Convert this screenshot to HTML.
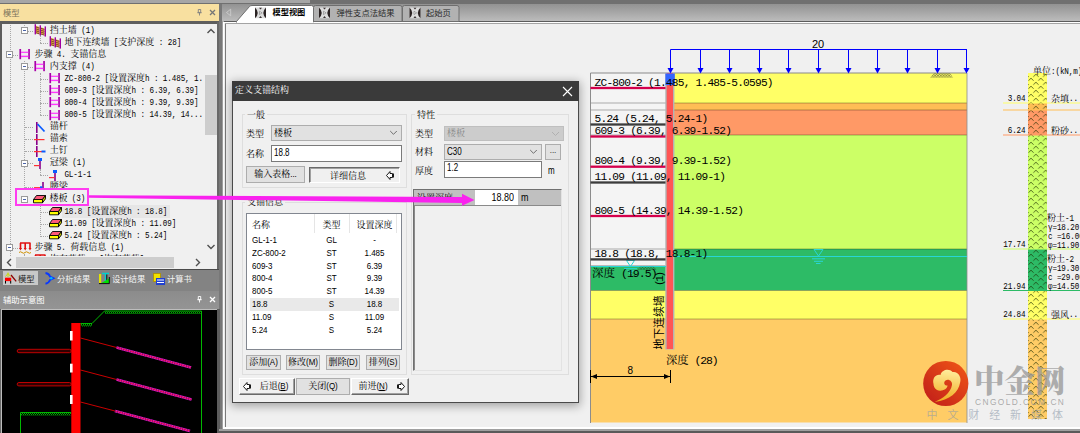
<!DOCTYPE html>
<html lang="zh-CN"><head><meta charset="utf-8"><title>定义支锚结构</title>
<style>
html,body{margin:0;padding:0;}
body{width:1080px;height:433px;overflow:hidden;position:relative;background:#a0a0a0;
 font-family:"Liberation Sans","Noto Serif CJK SC",serif;font-size:9px;color:#000;}
div,span{box-sizing:border-box;}
.abs{position:absolute;}
.t{position:absolute;white-space:nowrap;font-family:"Liberation Mono","Noto Serif CJK SC",serif;font-size:9px;line-height:12px;height:12px;}
.l{font-family:"Liberation Mono",monospace;font-size:7.6px;letter-spacing:-0.1px;display:inline-block;line-height:1;transform:scaleY(1.3);transform-origin:0 77%;}
.d{position:absolute;white-space:nowrap;font-family:"Liberation Sans","Noto Serif CJK SC",serif;font-size:9px;line-height:14px;height:14px;}
.n{font-family:"Liberation Sans",sans-serif;font-size:8px;display:inline-block;transform:scaleY(1.13);transform-origin:0 78%;}
.e{font-family:"Liberation Sans",sans-serif;font-size:8px;transform:scaleY(1.26);transform-origin:0 69%;}
.ts{font-family:"Liberation Sans","Noto Sans CJK SC",sans-serif;font-size:8.300px;}
.btn{position:absolute;background:#e1e1e1;border:1px solid #adadad;text-align:center;white-space:nowrap;font-family:"Liberation Sans","Noto Serif CJK SC",serif;font-size:9px;}
.btn3{position:absolute;background:#f0f0f0;border:1px solid;border-color:#fff #696969 #696969 #fff;box-shadow:inset -1px -1px 0 #a0a0a0;text-align:center;white-space:nowrap;font-family:"Liberation Sans","Noto Serif CJK SC",serif;font-size:9px;}
.gb{position:absolute;border:1px solid #dedede;}
.dot-v{position:absolute;width:0;border-left:1px dotted #a8a8a8;}
.dot-h{position:absolute;height:0;border-top:1px dotted #a8a8a8;}
.exp{position:absolute;width:7px;height:7px;border:1px solid #9a9a9a;background:#fff;}
.exp:after{content:"";position:absolute;left:1px;top:2px;width:3px;height:1px;background:#4b63a7;}
svg{position:absolute;overflow:visible;}
</style></head><body>

<div class="abs" style="left:0;top:0;width:1080px;height:4px;background:#707070;"></div>
<div class="abs" style="left:0;top:0;width:310px;height:3px;background:#a6a6a6;"></div>
<div class="abs" style="left:219px;top:4px;width:861px;height:17px;background:linear-gradient(#929292,#bcbcbc);"></div>
<div class="abs" style="left:0;top:4px;width:219px;height:17px;background:#f8e0a0;"></div>
<div class="t ts" style="left:3px;top:6.500px;color:#7a735c;">模型</div>
<svg style="left:195px;top:7px" width="22" height="12" viewBox="0 0 22 12"><path d="M3.300 2.500h2.400v3.200h-2.400zM2.300 5.700h4.400M4.500 5.700v2.800" fill="none" stroke="#808080" stroke-width="0.900"/><path d="M15 3l5 5M20 3l-5 5" stroke="#777" stroke-width="1.3" fill="none"/></svg>
<div class="abs" style="left:0;top:20.800px;width:219.400px;height:249px;background:#5e5e5e;"></div>
<div class="abs" style="left:2px;top:22px;width:215px;height:2px;background:#5e5e5e;z-index:3;"></div>
<div class="abs" id="tree" style="left:2.400px;top:22px;width:214.600px;height:246px;background:#f0f0f0;overflow:hidden;">
<div class="dot-v" style="left:8px;top:0px;height:234px;"></div>
<div class="dot-v" style="left:22px;top:0px;height:6px;"></div>
<div class="dot-v" style="left:38px;top:13px;height:8px;"></div>
<div class="dot-v" style="left:22px;top:39px;height:139px;"></div>
<div class="dot-v" style="left:38px;top:51px;height:42px;"></div>
<div class="dot-v" style="left:38px;top:147px;height:6px;"></div>
<div class="dot-v" style="left:38px;top:183px;height:30px;"></div>
<div class="dot-v" style="left:22px;top:232px;height:2px;"></div>
<div class="dot-h" style="left:23px;top:9px;width:8px;"></div>
<div class="exp" style="left:19px;top:5px;"></div>
<div class="abs" style="left:32px;top:3px;width:13px;height:12px;"><svg width="12" height="13" viewBox="0 0 12 13" style="top:-1px"><polygon points="1.800,1.800 5.500,3 5.500,10.500 1.800,9.300" fill="#e8a048"/><polygon points="6.800,3.200 10.500,4.400 10.500,11.500 6.800,10.300" fill="#e8a048"/><path d="M1.800 3L5.500 4.2M6.800 4.3L10.500 5.5" stroke="#503018" stroke-width="0.700" fill="none"/><path d="M1.800 4.9L5.500 6.1M6.800 6.2L10.500 7.4" stroke="#503018" stroke-width="0.700" fill="none"/><path d="M1.800 6.8L5.500 8M6.800 8.1L10.500 9.3" stroke="#503018" stroke-width="0.700" fill="none"/><path d="M1.800 8.7L5.500 9.9M6.800 10L10.500 11.2" stroke="#503018" stroke-width="0.700" fill="none"/><rect x="0.6" y="0.2" width="1.400" height="10.200" fill="#a000a0"/><rect x="5.6" y="1.3" width="1.400" height="10.200" fill="#a000a0"/><rect x="10.6" y="2.4" width="1.400" height="10.200" fill="#a000a0"/></svg></div>
<div class="t" style="left:47.4px;top:3px;">挡土墙<span class="l">&nbsp;(1)</span></div>
<div class="dot-h" style="left:38px;top:21px;width:8px;"></div>
<div class="abs" style="left:47px;top:15px;width:13px;height:12px;"><svg width="12" height="13" viewBox="0 0 12 13" style="top:-1px"><polygon points="1.800,1.800 5.500,3 5.500,10.500 1.800,9.300" fill="#e8a048"/><polygon points="6.800,3.200 10.500,4.400 10.500,11.500 6.800,10.300" fill="#e8a048"/><path d="M1.800 3L5.500 4.2M6.800 4.3L10.500 5.5" stroke="#503018" stroke-width="0.700" fill="none"/><path d="M1.800 4.9L5.500 6.1M6.800 6.2L10.500 7.4" stroke="#503018" stroke-width="0.700" fill="none"/><path d="M1.800 6.8L5.500 8M6.800 8.1L10.500 9.3" stroke="#503018" stroke-width="0.700" fill="none"/><path d="M1.800 8.7L5.500 9.9M6.800 10L10.500 11.2" stroke="#503018" stroke-width="0.700" fill="none"/><rect x="0.6" y="0.2" width="1.400" height="10.200" fill="#a000a0"/><rect x="5.6" y="1.3" width="1.400" height="10.200" fill="#a000a0"/><rect x="10.6" y="2.4" width="1.400" height="10.200" fill="#a000a0"/></svg></div>
<div class="t" style="left:62px;top:15px;">地下连续墙<span class="l">&nbsp;[</span>支护深度<span class="l">&nbsp;:&nbsp;28]</span></div>
<div class="dot-h" style="left:8px;top:33px;width:8px;"></div>
<div class="exp" style="left:4px;top:29px;"></div>
<div class="abs" style="left:16.5px;top:27px;width:13px;height:12px;"><svg width="12" height="11" viewBox="0 0 12 11"><rect x="0.400" y="0" width="1.700" height="10.200" fill="#a800a8"/><rect x="9.200" y="0" width="1.700" height="10.200" fill="#a800a8"/><rect x="2" y="2.700" width="7.300" height="1.200" fill="#ff38ff"/><rect x="2" y="6.700" width="7.300" height="1.400" fill="#ff38ff"/></svg></div>
<div class="t" style="left:32px;top:27px;">步骤<span class="l">&nbsp;4.&nbsp;</span>支锚信息</div>
<div class="dot-h" style="left:23px;top:45px;width:8px;"></div>
<div class="exp" style="left:19px;top:41px;"></div>
<div class="abs" style="left:32px;top:39px;width:13px;height:12px;"><svg width="12" height="11" viewBox="0 0 12 11"><rect x="0.400" y="0" width="1.700" height="10.200" fill="#a800a8"/><rect x="9.200" y="0" width="1.700" height="10.200" fill="#a800a8"/><rect x="2" y="2.700" width="7.300" height="1.200" fill="#ff38ff"/><rect x="2" y="6.700" width="7.300" height="1.400" fill="#ff38ff"/></svg></div>
<div class="t" style="left:47.4px;top:39px;">内支撑<span class="l">&nbsp;(4)</span></div>
<div class="dot-h" style="left:38px;top:57px;width:8px;"></div>
<div class="abs" style="left:47px;top:51px;width:13px;height:12px;"><svg width="12" height="11" viewBox="0 0 12 11"><rect x="0.400" y="0" width="1.700" height="10.200" fill="#a800a8"/><rect x="9.200" y="0" width="1.700" height="10.200" fill="#a800a8"/><rect x="2" y="2.700" width="7.300" height="1.200" fill="#ff38ff"/><rect x="2" y="6.700" width="7.300" height="1.400" fill="#ff38ff"/></svg></div>
<div class="t" style="left:62px;top:51px;"><span class="l">ZC-800-2&nbsp;[</span>设置深度<span class="l">h&nbsp;:&nbsp;1.485,&nbsp;1.</span></div>
<div class="dot-h" style="left:38px;top:69px;width:8px;"></div>
<div class="abs" style="left:47px;top:63px;width:13px;height:12px;"><svg width="12" height="11" viewBox="0 0 12 11"><rect x="0.400" y="0" width="1.700" height="10.200" fill="#a800a8"/><rect x="9.200" y="0" width="1.700" height="10.200" fill="#a800a8"/><rect x="2" y="2.700" width="7.300" height="1.200" fill="#ff38ff"/><rect x="2" y="6.700" width="7.300" height="1.400" fill="#ff38ff"/></svg></div>
<div class="t" style="left:62px;top:63px;"><span class="l">609-3&nbsp;[</span>设置深度<span class="l">h&nbsp;:&nbsp;6.39,&nbsp;6.39]</span></div>
<div class="dot-h" style="left:38px;top:81px;width:8px;"></div>
<div class="abs" style="left:47px;top:75px;width:13px;height:12px;"><svg width="12" height="11" viewBox="0 0 12 11"><rect x="0.400" y="0" width="1.700" height="10.200" fill="#a800a8"/><rect x="9.200" y="0" width="1.700" height="10.200" fill="#a800a8"/><rect x="2" y="2.700" width="7.300" height="1.200" fill="#ff38ff"/><rect x="2" y="6.700" width="7.300" height="1.400" fill="#ff38ff"/></svg></div>
<div class="t" style="left:62px;top:75px;"><span class="l">800-4&nbsp;[</span>设置深度<span class="l">h&nbsp;:&nbsp;9.39,&nbsp;9.39]</span></div>
<div class="dot-h" style="left:38px;top:93px;width:8px;"></div>
<div class="abs" style="left:47px;top:88px;width:13px;height:12px;"><svg width="12" height="11" viewBox="0 0 12 11"><rect x="0.400" y="0" width="1.700" height="10.200" fill="#a800a8"/><rect x="9.200" y="0" width="1.700" height="10.200" fill="#a800a8"/><rect x="2" y="2.700" width="7.300" height="1.200" fill="#ff38ff"/><rect x="2" y="6.700" width="7.300" height="1.400" fill="#ff38ff"/></svg></div>
<div class="t" style="left:62px;top:87px;"><span class="l">800-5&nbsp;[</span>设置深度<span class="l">h&nbsp;:&nbsp;14.39,&nbsp;14...</span></div>
<div class="dot-h" style="left:23px;top:105px;width:8px;"></div>
<div class="abs" style="left:32px;top:100px;width:13px;height:12px;"><svg width="12" height="12" viewBox="0 0 12 12"><rect x="2" y="0" width="1.6" height="11" fill="#8a008a"/><path d="M3.5 2L10.5 9.5" stroke="#0a5cff" stroke-width="1.8"/></svg></div>
<div class="t" style="left:47.4px;top:99px;">锚杆</div>
<div class="dot-h" style="left:23px;top:117px;width:8px;"></div>
<div class="abs" style="left:32px;top:112px;width:13px;height:12px;"><svg width="12" height="12" viewBox="0 0 12 12"><rect x="2" y="0" width="1.6" height="11" fill="#8a008a"/><rect x="0" y="5" width="10.5" height="1.2" fill="#ff3030"/></svg></div>
<div class="t" style="left:47.4px;top:111px;">锚索</div>
<div class="dot-h" style="left:23px;top:129px;width:8px;"></div>
<div class="abs" style="left:32px;top:124px;width:13px;height:12px;"><svg width="12" height="12" viewBox="0 0 12 12"><rect x="2" y="0" width="1.6" height="11" fill="#8a008a"/><rect x="0" y="5" width="8" height="1.2" fill="#ff3030"/><rect x="7.5" y="4.5" width="4" height="2" fill="#0a5cff"/></svg></div>
<div class="t" style="left:47.4px;top:123px;">土钉</div>
<div class="dot-h" style="left:23px;top:141px;width:8px;"></div>
<div class="exp" style="left:19px;top:138px;"></div>
<div class="abs" style="left:32px;top:136px;width:13px;height:12px;"><svg width="12" height="12" viewBox="0 0 12 12"><rect x="4" y="0" width="4" height="3" fill="#0a5cff"/><rect x="5.2" y="3" width="1.6" height="8" fill="#8a008a"/><rect x="0" y="7" width="5.5" height="1.2" fill="#ff3030"/></svg></div>
<div class="t" style="left:47.4px;top:135px;">冠梁<span class="l">&nbsp;(1)</span></div>
<div class="dot-h" style="left:38px;top:153px;width:8px;"></div>
<div class="abs" style="left:47px;top:148px;width:13px;height:12px;"><svg width="12" height="12" viewBox="0 0 12 12"><rect x="4" y="0" width="4" height="3" fill="#0a5cff"/><rect x="5.2" y="3" width="1.6" height="8" fill="#8a008a"/><rect x="0" y="7" width="5.5" height="1.2" fill="#ff3030"/></svg></div>
<div class="t" style="left:62px;top:147px;"><span class="l">GL-1-1</span></div>
<div class="dot-h" style="left:23px;top:165px;width:8px;"></div>
<div class="abs" style="left:32px;top:160px;width:13px;height:12px;"><svg width="12" height="12" viewBox="0 0 12 12"><rect x="8.200" y="0" width="1.600" height="11" fill="#8a008a"/><rect x="0" y="5" width="6.500" height="1.200" fill="#ff4040"/><rect x="6" y="4.300" width="2.400" height="2.600" fill="#0a5cff"/></svg></div>
<div class="t" style="left:47.4px;top:159px;">腰梁</div>
<div class="dot-h" style="left:23px;top:177px;width:8px;"></div>
<div class="exp" style="left:19px;top:174px;"></div>
<div class="abs" style="left:32px;top:172px;width:13px;height:12px;"><svg width="13" height="10" viewBox="0 0 13 10"><polygon points="0.5,5.5 3.5,1.5 12.5,1.5 9.5,5.5" fill="#ff5a7a" stroke="#000" stroke-width="0.9"/><polygon points="0.5,5.5 9.5,5.5 9.5,8.8 0.5,8.8" fill="#ffff00" stroke="#000" stroke-width="0.9"/><polygon points="9.5,5.5 12.5,1.5 12.5,4.8 9.5,8.8" fill="#c8c800" stroke="#000" stroke-width="0.9"/></svg></div>
<div class="t" style="left:47.4px;top:171px;">楼板<span class="l">&nbsp;(3)</span></div>
<div class="dot-h" style="left:38px;top:190px;width:8px;"></div>
<div class="abs" style="left:60px;top:183px;width:108px;height:13px;background:#e6e6e6;"></div>
<div class="abs" style="left:47px;top:184px;width:13px;height:12px;"><svg width="13" height="10" viewBox="0 0 13 10"><polygon points="0.5,5.5 3.5,1.5 12.5,1.5 9.5,5.5" fill="#ff5a7a" stroke="#000" stroke-width="0.9"/><polygon points="0.5,5.5 9.5,5.5 9.5,8.8 0.5,8.8" fill="#ffff00" stroke="#000" stroke-width="0.9"/><polygon points="9.5,5.5 12.5,1.5 12.5,4.8 9.5,8.8" fill="#c8c800" stroke="#000" stroke-width="0.9"/></svg></div>
<div class="t" style="left:62px;top:184px;"><span class="l">18.8&nbsp;[</span>设置深度<span class="l">h&nbsp;:&nbsp;18.8]</span></div>
<div class="dot-h" style="left:38px;top:202px;width:8px;"></div>
<div class="abs" style="left:47px;top:196px;width:13px;height:12px;"><svg width="13" height="10" viewBox="0 0 13 10"><polygon points="0.5,5.5 3.5,1.5 12.5,1.5 9.5,5.5" fill="#ff5a7a" stroke="#000" stroke-width="0.9"/><polygon points="0.5,5.5 9.5,5.5 9.5,8.8 0.5,8.8" fill="#ffff00" stroke="#000" stroke-width="0.9"/><polygon points="9.5,5.5 12.5,1.5 12.5,4.8 9.5,8.8" fill="#c8c800" stroke="#000" stroke-width="0.9"/></svg></div>
<div class="t" style="left:62px;top:196px;"><span class="l">11.09&nbsp;[</span>设置深度<span class="l">h&nbsp;:&nbsp;11.09]</span></div>
<div class="dot-h" style="left:38px;top:214px;width:8px;"></div>
<div class="abs" style="left:47px;top:208px;width:13px;height:12px;"><svg width="13" height="10" viewBox="0 0 13 10"><polygon points="0.5,5.5 3.5,1.5 12.5,1.5 9.5,5.5" fill="#ff5a7a" stroke="#000" stroke-width="0.9"/><polygon points="0.5,5.5 9.5,5.5 9.5,8.8 0.5,8.8" fill="#ffff00" stroke="#000" stroke-width="0.9"/><polygon points="9.5,5.5 12.5,1.5 12.5,4.8 9.5,8.8" fill="#c8c800" stroke="#000" stroke-width="0.9"/></svg></div>
<div class="t" style="left:62px;top:208px;"><span class="l">5.24&nbsp;[</span>设置深度<span class="l">h&nbsp;:&nbsp;5.24]</span></div>
<div class="dot-h" style="left:8px;top:226px;width:8px;"></div>
<div class="exp" style="left:4px;top:222px;"></div>
<div class="abs" style="left:16.5px;top:220px;width:13px;height:12px;"><svg width="13" height="12" viewBox="0 0 13 12"><path d="M1 1h10.5M1.5 1v6M6.2 1v6M11 1v6" stroke="#e01010" stroke-width="1.6" fill="none"/><path d="M0 6h3l-1.5 2.5zM4.7 6h3l-1.5 2.5zM9.5 6h3l-1.5 2.5z" fill="#e01010"/><path d="M0 10.5q1.5-1.5 3 0t3 0 3 0 3 0" stroke="#d09000" stroke-width="1" fill="none"/></svg></div>
<div class="t" style="left:32px;top:220px;">步骤<span class="l">&nbsp;5.&nbsp;</span>荷载信息<span class="l">&nbsp;(1)</span></div>
<div class="dot-h" style="left:23px;top:238px;width:8px;"></div>
<div class="abs" style="left:32px;top:232px;width:13px;height:12px;"><svg width="13" height="12" viewBox="0 0 13 12"><path d="M1 1h10.5M1.5 1v6M6.2 1v6M11 1v6" stroke="#e01010" stroke-width="1.6" fill="none"/><path d="M0 6h3l-1.5 2.5zM4.7 6h3l-1.5 2.5zM9.5 6h3l-1.5 2.5z" fill="#e01010"/><path d="M0 10.5q1.5-1.5 3 0t3 0 3 0 3 0" stroke="#d09000" stroke-width="1" fill="none"/></svg></div>
<div class="t" style="left:47.4px;top:232px;">均布荷载<span class="l">&nbsp;:&nbsp;[</span>均布荷载<span class="l">]</span></div>
</div>
<div class="abs" style="left:204px;top:22px;width:13px;height:234px;background:#f0f0f0;"></div>
<div class="abs" style="left:205px;top:75px;width:12px;height:60px;background:#cdcdcd;"></div>
<svg style="left:205px;top:27px" width="12" height="8" viewBox="0 0 12 8"><path d="M2.5 6L6 2.5L9.5 6" fill="none" stroke="#505050" stroke-width="1.4"/></svg>
<svg style="left:205px;top:243px" width="12" height="8" viewBox="0 0 12 8"><path d="M2.5 2L6 5.5L9.5 2" fill="none" stroke="#505050" stroke-width="1.4"/></svg>
<div class="abs" style="left:2px;top:256px;width:215px;height:13px;background:#f0f0f0;"></div>
<div class="abs" style="left:16px;top:257px;width:158px;height:11px;background:#cdcdcd;"></div>
<svg style="left:5px;top:257px" width="8" height="11" viewBox="0 0 8 11"><path d="M6 2L2.5 5.5L6 9" fill="none" stroke="#505050" stroke-width="1.4"/></svg>
<svg style="left:194px;top:257px" width="8" height="11" viewBox="0 0 8 11"><path d="M2 2L5.5 5.5L2 9" fill="none" stroke="#505050" stroke-width="1.4"/></svg>
<div class="abs" style="left:15px;top:188px;width:74px;height:18px;border:2px solid #ff3cf0;background:#f0f0f0;"></div>
<div class="exp" style="left:21px;top:196px;"></div>
<div class="abs" style="left:33px;top:194px;width:13px;height:12px;"><svg width="13" height="10" viewBox="0 0 13 10"><polygon points="0.5,5.5 3.5,1.5 12.5,1.5 9.5,5.5" fill="#ff5a7a" stroke="#000" stroke-width="0.9"/><polygon points="0.5,5.5 9.5,5.5 9.5,8.8 0.5,8.8" fill="#ffff00" stroke="#000" stroke-width="0.9"/><polygon points="9.5,5.5 12.5,1.5 12.5,4.8 9.5,8.8" fill="#c8c800" stroke="#000" stroke-width="0.9"/></svg></div>
<div class="t" style="left:49.400px;top:193px;">楼板<span class="l">&nbsp;(3)</span></div>
<div class="abs" style="left:0;top:269px;width:219.400px;height:22px;background:#838383;border-top:1.500px solid #4a4a4a;"></div>
<div class="abs" style="left:3px;top:271px;width:34.500px;height:13.500px;background:#c8c8c8;"></div>
<svg style="left:4px;top:272px" width="13" height="13" viewBox="0 0 13 13"><rect x="1" y="5.700" width="6.200" height="3.400" fill="#ff0000"/><path d="M1.500 9v2.600M6.700 9v2.600" stroke="#000" stroke-width="1"/><path d="M1.500 4.500l2.500-3 2.500 3M4 0.500v4.500" stroke="#c8dc00" stroke-width="0.900" fill="none"/><path d="M7 3l5.200 6.300" stroke="#8a0000" stroke-width="1.300"/></svg>
<div class="t ts" style="left:18px;top:273px;color:#222;">模型</div>
<svg style="left:45px;top:272px" width="10" height="13" viewBox="0 0 10 13"><path d="M0.500 1Q4 1.500 5 4.500L8.500 6.300L5 8Q4 11 0.500 11.700" stroke="#0838ff" stroke-width="1.900" fill="none"/><circle cx="6.300" cy="6.300" r="1.300" fill="#00b8ff"/></svg>
<div class="t ts" style="left:57px;top:273px;color:#f4f4f4;">分析结果</div>
<svg style="left:99px;top:272px" width="12" height="13" viewBox="0 0 12 13"><rect x="0" y="2" width="2.200" height="9" fill="#e4e400"/><path d="M3 1.500h7M6.500 1.500v8" stroke="#00d0d0" stroke-width="1.500" fill="none"/><path d="M7.800 2.500v8" stroke="#000" stroke-width="0.900"/><polygon points="2.500,11 10,11 10,6.500" fill="#00e000"/><path d="M0 11.600h10.500M10.300 5v6.500" stroke="#000" stroke-width="0.900" fill="none"/></svg>
<div class="t ts" style="left:112px;top:273px;color:#f4f4f4;">设计结果</div>
<svg style="left:153px;top:273px" width="13" height="13" viewBox="0 0 13 13"><rect x="0.5" y="0.5" width="7" height="8" fill="#f0e000" stroke="#b09000" stroke-width="0.8"/><rect x="3" y="5" width="9" height="7" fill="#2040d0"/><path d="M4 7h7M4 9.5h7" stroke="#fff" stroke-width="1"/></svg>
<div class="t ts" style="left:167px;top:273px;color:#f4f4f4;">计算书</div>
<div class="abs" style="left:0;top:291px;width:219.400px;height:18px;background:linear-gradient(#8c8c8c,#949494);"></div>
<div class="t ts" style="left:3px;top:294px;color:#fff;">辅助示意图</div>
<svg style="left:195px;top:294px" width="22" height="12" viewBox="0 0 22 12"><path d="M3.300 2.500h2.400v3.200h-2.400zM2.300 5.700h4.400M4.500 5.700v2.800" fill="none" stroke="#fff" stroke-width="0.900"/><path d="M15 3l5 5M20 3l-5 5" stroke="#fff" stroke-width="1.3" fill="none"/></svg>
<div class="abs" style="left:0;top:309px;width:219px;height:124px;background:#6a6a6a;"></div>
<div class="abs" style="left:1px;top:309px;width:217px;height:124px;background:#bdbdbd;"></div>
<div class="abs" style="left:2px;top:310px;width:215px;height:123px;background:#000;"></div>
<svg style="left:0;top:0" width="220" height="433" viewBox="0 0 220 433"><defs><pattern id="gh" width="2" height="3" patternUnits="userSpaceOnUse"><path d="M0 3L2 0" stroke="#00e000" stroke-width="0.9"/></pattern><pattern id="mh" width="3" height="3" patternUnits="userSpaceOnUse" patternTransform="rotate(14)"><rect width="3" height="3" fill="#ff20e0"/><path d="M0 3L3 0" stroke="#7a1070" stroke-width="0.8"/></pattern></defs><path d="M80.5 323.5H92L104.5 311H201.5V433" fill="none" stroke="#00b800" stroke-width="1"/><rect x="81" y="324" width="11" height="2.5" fill="url(#gh)"/><rect x="105" y="311.5" width="96" height="2.5" fill="url(#gh)"/><path d="M20.5 433V412.500H71" fill="none" stroke="#00b800" stroke-width="1"/><rect x="21" y="413" width="50" height="2.5" fill="url(#gh)"/><rect x="17.2" y="349.3" width="54" height="3.4" rx="1.7" fill="#300000" stroke="#d00000" stroke-width="0.9"/><rect x="17.2" y="382.5" width="54" height="3.4" rx="1.7" fill="#300000" stroke="#d00000" stroke-width="0.9"/><path d="M80.5 338 L116.5 347.5" stroke="#c80000" stroke-width="1"/><path d="M116.5 347.5 L191 367.5" stroke="#e818d8" stroke-width="2.700"/><path d="M116.5 347.5 L191 367.5" stroke="#ff1048" stroke-width="1.100"/><path d="M116.5 347.5 L191 367.5" stroke="#70106a" stroke-width="2.700" stroke-dasharray="0.700 1.700"/><path d="M80.5 370 L116.5 379.5" stroke="#c80000" stroke-width="1"/><path d="M116.5 379.5 L191.5 399.5" stroke="#e818d8" stroke-width="2.700"/><path d="M116.5 379.5 L191.5 399.5" stroke="#ff1048" stroke-width="1.100"/><path d="M116.5 379.5 L191.5 399.5" stroke="#70106a" stroke-width="2.700" stroke-dasharray="0.700 1.700"/><path d="M80.5 402 L115 411" stroke="#c80000" stroke-width="1"/><path d="M115 411 L190 431" stroke="#e818d8" stroke-width="2.700"/><path d="M115 411 L190 431" stroke="#ff1048" stroke-width="1.100"/><path d="M115 411 L190 431" stroke="#70106a" stroke-width="2.700" stroke-dasharray="0.700 1.700"/><rect x="71.3" y="323" width="9.2" height="110" fill="#ff0000"/><rect x="70" y="331" width="2.6" height="9.5" fill="#fff"/><rect x="70" y="363.7" width="2.6" height="8.8" fill="#fff"/><rect x="70" y="395" width="2.6" height="9" fill="#fff"/></svg>
<div class="abs" style="left:217px;top:22px;width:2.400px;height:247px;background:#686868;"></div>
<div class="abs" style="left:219.400px;top:4px;width:3.100px;height:429px;background:#787878;"></div>
<div class="abs" style="left:217px;top:309px;width:3px;height:124px;background:#5c5c5c;"></div>
<div class="abs" style="left:222.500px;top:21px;width:857.500px;height:408px;background:#f0f0f0;border-top:1px solid #5c5c5c;border-left:1px solid #fff;"></div>
<div class="abs" style="left:224px;top:22px;width:856px;height:1px;background:#fff;"></div>
<div class="abs" style="left:225px;top:23px;width:1px;height:405px;background:#7a7a7a;"></div>
<div class="abs" style="left:225px;top:23px;width:855px;height:1px;background:#a4a4a4;"></div>
<div class="abs" style="left:223px;top:427px;width:857px;height:2px;background:#fff;"></div>
<div class="abs" style="left:219px;top:429px;width:861px;height:2px;background:#a0a0a0;"></div>
<div class="abs" style="left:219px;top:431px;width:861px;height:2px;background:#5a5a5a;"></div>
<svg style="left:0;top:0" width="1080" height="24" viewBox="0 0 1080 24"><path d="M226.500 12.500l4.200-3.300v6.600z" fill="none" stroke="#d0d0d0" stroke-width="0.800"/><path d="M313.500 21.5V7.500q0-2 2-2H400q2 0 2 2V21.500z" fill="#b2b2b2" stroke="#6e6e6e" stroke-width="1"/><path d="M402.500 21.5V7.500q0-2 2-2H457q2 0 2 2V21.500z" fill="#b2b2b2" stroke="#6e6e6e" stroke-width="1"/><path d="M236 22L249.500 6.500q1-1 2.500-1H311.500q2 0 2 2V22z" fill="#fff" stroke="#6e6e6e" stroke-width="1"/><rect x="237" y="21" width="76" height="2" fill="#fff"/><g transform="translate(255,7.500)"><rect width="11" height="10.700" fill="#dcdcdc"/><path d="M0 0Q5.400 5.350 0 10.700z" fill="#2a2222"/><path d="M11 0Q5.600 5.350 11 10.700z" fill="#2a2222"/><path d="M4 0.300h3l-1.500 1.800zM4 10.400h3l-1.500-1.800z" fill="#3a3333"/><path d="M4.500 3.800v3.200l2.600-1.600z" fill="#eee" stroke="#777" stroke-width="0.600"/></g><g transform="translate(319,7.500)"><rect width="11" height="10.700" fill="#dcdcdc"/><path d="M0 0Q5.400 5.350 0 10.700z" fill="#2a2222"/><path d="M11 0Q5.600 5.350 11 10.700z" fill="#2a2222"/><path d="M4 0.300h3l-1.500 1.800zM4 10.400h3l-1.500-1.800z" fill="#3a3333"/><path d="M4.500 3.800v3.200l2.600-1.600z" fill="#eee" stroke="#777" stroke-width="0.600"/></g><g transform="translate(409.5,7.500)"><rect width="11" height="10.700" fill="#dcdcdc"/><path d="M0 0Q5.400 5.350 0 10.700z" fill="#2a2222"/><path d="M11 0Q5.600 5.350 11 10.700z" fill="#2a2222"/><path d="M4 0.300h3l-1.500 1.800zM4 10.400h3l-1.500-1.800z" fill="#3a3333"/><path d="M4.500 3.800v3.200l2.600-1.600z" fill="#eee" stroke="#777" stroke-width="0.600"/></g></svg>
<div class="t" style="left:272.500px;top:7px;font-weight:bold;font-size:8.200px;font-family:'Liberation Sans','Noto Sans CJK SC',sans-serif;">模型视图</div>
<div class="t" style="left:336.500px;top:7px;color:#2a2a2a;font-size:8.300px;font-family:'Liberation Sans','Noto Sans CJK SC',sans-serif;">弹性支点法结果</div>
<div class="t" style="left:426px;top:7px;color:#2a2a2a;font-size:8.300px;font-family:'Liberation Sans','Noto Sans CJK SC',sans-serif;">起始页</div><svg style="left:0;top:0" width="1080" height="433" viewBox="0 0 1080 433" font-family='"Liberation Mono","Noto Serif CJK SC",serif'><defs><pattern id="chev" x="1028" y="73" width="9.800" height="8" patternUnits="userSpaceOnUse"><path d="M0.400 7.800L3 5.200L5.600 7.800M5.300 3.800L7.900 1.200L10.500 3.800M-4.500 3.800L-1.900 1.200L0.700 3.800" fill="none" stroke="#1a2a00" stroke-opacity="0.72" stroke-width="0.95"/></pattern><pattern id="xh" width="2.800" height="2.800" patternUnits="userSpaceOnUse"><path d="M0 0L2.800 2.800M2.800 0L0 2.800" stroke="#1a1a1a" stroke-width="0.550" stroke-opacity="0.8"/></pattern></defs><rect x="590.5" y="73" width="75" height="193" fill="#f4f4f4"/><rect x="674" y="73" width="293" height="30" fill="#ffff66"/><rect x="674" y="103" width="293" height="7" fill="#ffbd55"/><rect x="674" y="110" width="293" height="25" fill="#ff9966"/><rect x="674" y="135" width="293" height="114" fill="#ccff66"/><rect x="674" y="249" width="293" height="41.5" fill="#2dbb66"/><rect x="590.5" y="266" width="83.5" height="24.5" fill="#2dbb66"/><rect x="674" y="290.5" width="293" height="28.5" fill="#ffff66"/><rect x="590.5" y="290.5" width="83.5" height="28.5" fill="#ffff66"/><rect x="674" y="319" width="293" height="103.5" fill="#ffcc66"/><rect x="590.5" y="319" width="83.5" height="103.5" fill="#ffcc66"/><rect x="590.5" y="102.5" width="376.5" height="1" fill="#000" fill-opacity="0.3"/><rect x="590.5" y="109.5" width="376.5" height="1" fill="#000" fill-opacity="0.3"/><rect x="590.5" y="134.5" width="376.5" height="1" fill="#000" fill-opacity="0.3"/><rect x="590.5" y="248.5" width="376.5" height="1" fill="#000" fill-opacity="0.3"/><rect x="590.5" y="290" width="376.5" height="1" fill="#000" fill-opacity="0.3"/><rect x="590.5" y="318.5" width="376.5" height="1" fill="#000" fill-opacity="0.3"/><rect x="590.5" y="72.500" width="376.5" height="1" fill="#8a8a8a"/><rect x="590" y="73" width="1" height="350" fill="#8c8c8c"/><rect x="966.5" y="73" width="1" height="350" fill="#8c8c8c" fill-opacity="0.8"/><rect x="590.5" y="265.500" width="75" height="1" fill="#808080"/><rect x="665.300" y="73" width="9.100" height="276.500" fill="#b4b4b4"/><rect x="666.700" y="73" width="6.300" height="276" fill="#ff5555"/><rect x="665.400" y="73.500" width="9.400" height="11.600" fill="#3366ff"/><g stroke="#0000ff" stroke-width="1" fill="#0000ff"><path d="M670.500 49.500H967" fill="none"/><path d="M670.5 49.500V68" fill="none"/><path d="M667.5 68h6l-3 5.5z" stroke="none"/><path d="M700.5 49.500V68" fill="none"/><path d="M697.5 68h6l-3 5.5z" stroke="none"/><path d="M729.5 49.500V68" fill="none"/><path d="M726.5 68h6l-3 5.5z" stroke="none"/><path d="M759.5 49.500V68" fill="none"/><path d="M756.5 68h6l-3 5.5z" stroke="none"/><path d="M788.5 49.500V68" fill="none"/><path d="M785.5 68h6l-3 5.5z" stroke="none"/><path d="M818.5 49.500V68" fill="none"/><path d="M815.5 68h6l-3 5.5z" stroke="none"/><path d="M848.5 49.500V68" fill="none"/><path d="M845.5 68h6l-3 5.5z" stroke="none"/><path d="M877.5 49.500V68" fill="none"/><path d="M874.5 68h6l-3 5.5z" stroke="none"/><path d="M907.5 49.500V68" fill="none"/><path d="M904.5 68h6l-3 5.5z" stroke="none"/><path d="M937.5 49.500V68" fill="none"/><path d="M934.5 68h6l-3 5.5z" stroke="none"/><path d="M966.5 49.500V68" fill="none"/><path d="M963.5 68h6l-3 5.5z" stroke="none"/></g><text x="812" y="48" font-family='"Liberation Sans",sans-serif' font-size="11" fill="#000">20</text><polygon points="934,73.300 950,73.300 953.200,77.800 930,77.800" fill="url(#xh)"/><path d="M674 256.500H967" stroke="#28d6d6" stroke-width="1"/><path d="M814 249.500h9l-4.500 6.500zM812 258.800h13M814 261.300h9M816 263.500h4.500" fill="none" stroke="#28d6d6" stroke-width="1"/><path d="M590.500 266.500H666" stroke="#28d6d6" stroke-width="1"/><path d="M626.500 260.500h8l-4 6zM624 268.700h13M627 271h7M629 273.300h3" fill="none" stroke="#28d6d6" stroke-width="1"/><polygon points="640,266.800 654,266.800 656.500,270 637.500,270" fill="url(#xh)" opacity="0.800"/><rect x="590.5" y="86.85" width="75" height="2.300" fill="#d4004c"/><text x="594.5" y="85.9" font-size="11.200" letter-spacing="-0.770" fill="#000">ZC-800-2 (1.485, 1.485-5.0595)</text><rect x="590.5" y="123.35" width="75" height="2.300" fill="#3c3c3c"/><text x="594.5" y="122.4" font-size="11.200" letter-spacing="-0.770" fill="#000">5.24 (5.24, 5.24-1)</text><rect x="590.5" y="135.35" width="75" height="2.300" fill="#d4004c"/><text x="594.5" y="133.9" font-size="11.200" letter-spacing="-0.770" fill="#000">609-3 (6.39, 6.39-1.52)</text><rect x="590.5" y="165.55" width="75" height="2.300" fill="#d4004c"/><text x="594.5" y="164.1" font-size="11.200" letter-spacing="-0.770" fill="#000">800-4 (9.39, 9.39-1.52)</text><rect x="590.5" y="181.35" width="75" height="2.300" fill="#3c3c3c"/><text x="594.5" y="180.4" font-size="11.200" letter-spacing="-0.770" fill="#000">11.09 (11.09, 11.09-1)</text><rect x="590.5" y="214.85" width="75" height="2.300" fill="#d4004c"/><text x="594.5" y="213.9" font-size="11.200" letter-spacing="-0.770" fill="#000">800-5 (14.39, 14.39-1.52)</text><rect x="590.5" y="258.25" width="75" height="2.300" fill="#3c3c3c"/><text x="594.5" y="257.2" font-size="11.200" letter-spacing="-0.770" fill="#000">18.8 (18.8, 18.8-1)</text><text x="592" y="277.300" font-size="11.500">深度<tspan font-size="11.500" letter-spacing="-0.95"> (19.5)</tspan></text><text x="666" y="364" font-size="11.300">深度<tspan font-size="11.500" letter-spacing="-1.100"> (28)</tspan></text><text transform="translate(663,349.500) rotate(-90)" font-size="10.800" font-family="'Liberation Sans','Noto Sans CJK SC',sans-serif">地下连续墙</text><text transform="translate(662.800,286) rotate(-90)" font-size="11" letter-spacing="-2.400">(1)</text><path d="M590.500 376.500H670.500M590.500 370V383M670.500 370V383" stroke="#000" stroke-width="1" fill="none"/><path d="M591 376.500l6-2.500v5zM670 376.500l-6-2.500v5z" fill="#000"/><text x="627.500" y="374" font-family='"Liberation Sans",sans-serif' font-size="10">8</text><rect x="1028" y="73" width="19" height="30" fill="#ffff66"/><rect x="1028" y="103" width="19" height="7" fill="#ffbd55"/><rect x="1028" y="110" width="19" height="25" fill="#ff9966"/><rect x="1028" y="135" width="19" height="114" fill="#ccff66"/><rect x="1028" y="249" width="19" height="41.5" fill="#2dbb66"/><rect x="1028" y="290.5" width="19" height="28.5" fill="#ffff66"/><rect x="1028" y="319" width="19" height="100" fill="#ffcc66"/><rect x="1028" y="73" width="19" height="346" fill="url(#chev)"/><rect x="1003" y="102.5" width="77" height="1" fill="#ffff66"/><text transform="translate(1025.5,101.2) scale(1,1.3)" font-size="7.6" letter-spacing="-0.1" text-anchor="end">3.04</text><text x="1051" y="101.5" font-size="9">杂填</text><text transform="translate(1069,101.2) scale(1,1.3)" font-size="7.6" letter-spacing="-0.1" text-anchor="start">..</text><rect x="1003" y="109.5" width="77" height="1" fill="#ffbd55"/><rect x="1003" y="134.5" width="77" height="1" fill="#ff9966"/><text transform="translate(1025.5,133.2) scale(1,1.3)" font-size="7.6" letter-spacing="-0.1" text-anchor="end">6.24</text><text x="1051" y="133.5" font-size="9">粉砂</text><text transform="translate(1069,133.2) scale(1,1.3)" font-size="7.6" letter-spacing="-0.1" text-anchor="start">..</text><rect x="1003" y="248.5" width="77" height="1" fill="#ccff66"/><text transform="translate(1025.5,247.2) scale(1,1.3)" font-size="7.6" letter-spacing="-0.1" text-anchor="end">17.74</text><rect x="1003" y="290" width="77" height="1" fill="#2dbb66"/><text transform="translate(1025.5,288.7) scale(1,1.3)" font-size="7.6" letter-spacing="-0.1" text-anchor="end">21.94</text><rect x="1003" y="318.5" width="77" height="1" fill="#ffff66"/><text transform="translate(1025.5,317.2) scale(1,1.3)" font-size="7.6" letter-spacing="-0.1" text-anchor="end">24.84</text><text x="1051" y="317.5" font-size="9">强风</text><text transform="translate(1069,317.2) scale(1,1.3)" font-size="7.6" letter-spacing="-0.1" text-anchor="start">..</text><text x="1033" y="74" font-size="9">单位</text><text transform="translate(1051,73.5) scale(1,1.3)" font-size="7.6" letter-spacing="-0.1" text-anchor="start">:(kN,m)</text><text x="1047" y="220.8" font-size="9">粉土</text><text transform="translate(1065,220.5) scale(1,1.3)" font-size="7.6" letter-spacing="-0.1" text-anchor="start">-1</text><text transform="translate(1048,229.8) scale(1,1.3)" font-size="7.6" letter-spacing="-0.1" text-anchor="start">γ=18.20</text><text transform="translate(1048,238.9) scale(1,1.3)" font-size="7.6" letter-spacing="-0.1" text-anchor="start">c =16.00</text><text transform="translate(1048,248) scale(1,1.3)" font-size="7.6" letter-spacing="-0.1" text-anchor="start">φ=11.90</text><text x="1047" y="262" font-size="9">粉土</text><text transform="translate(1065,261.7) scale(1,1.3)" font-size="7.6" letter-spacing="-0.1" text-anchor="start">-2</text><text transform="translate(1048,271) scale(1,1.3)" font-size="7.6" letter-spacing="-0.1" text-anchor="start">γ=19.30</text><text transform="translate(1048,280.1) scale(1,1.3)" font-size="7.6" letter-spacing="-0.1" text-anchor="start">c =29.00</text><text transform="translate(1048,289.2) scale(1,1.3)" font-size="7.6" letter-spacing="-0.1" text-anchor="start">φ=14.50</text></svg><div class="abs" style="left:232px;top:81px;width:347px;height:322px;background:#f0f0f0;border:1px solid #4a4a4a;box-shadow:0 2px 9px 1px rgba(0,0,0,0.33);"></div>
<div class="abs" style="left:232px;top:81px;width:347px;height:20px;background:#3a3a3a;"></div>
<div class="t" style="left:235px;top:85px;color:#fff;">定义支锚结构</div>
<svg style="left:562px;top:86px" width="11" height="11" viewBox="0 0 11 11"><path d="M1 1l9 9M10 1l-9 9" stroke="#fff" stroke-width="1.1" fill="none"/></svg>
<div class="gb" style="left:242px;top:114px;width:165px;height:74px;"></div>
<div class="gb" style="left:242px;top:202px;width:165px;height:173px;"></div>
<div class="gb" style="left:411px;top:114px;width:158px;height:261px;"></div>
<div class="d" style="left:245px;top:108px;background:#f0f0f0;padding:0 2px;">一般</div>
<div class="d" style="left:415px;top:108px;background:#f0f0f0;padding:0 2px;">特性</div>
<div class="d" style="left:245px;top:195px;background:#f0f0f0;padding:0 2px;">支锚信息</div>
<div class="d" style="left:246px;top:127px;">类型</div>
<div class="abs" style="left:271px;top:125px;width:131px;height:16px;background:#e1e1e1;border:1px solid #adadad;"></div>
<div class="d" style="left:274px;top:126px;">楼板</div>
<svg style="left:389px;top:130px" width="9" height="6" viewBox="0 0 9 6"><path d="M1.200 1l3.300 3.300L7.800 1" stroke="#606060" stroke-width="0.900" fill="none"/></svg>
<div class="d" style="left:246px;top:147px;">名称</div>
<div class="abs" style="left:271px;top:145px;width:131px;height:17px;background:#fff;border:1px solid #7a7a7a;"></div>
<div class="d e" style="left:274px;top:147px;">18.8</div>
<div class="btn" style="left:246px;top:166px;width:59px;height:17px;line-height:15px;">输入表格<span class="n">...</span></div>
<div class="abs" style="left:309px;top:167px;width:91px;height:16px;background:#f0f0f0;border:1px solid;border-color:#696969 #fff #fff #696969;box-shadow:inset 1px 1px 0 #a0a0a0;"></div>
<div class="d" style="left:330px;top:169px;">详细信息</div>
<svg style="left:386px;top:171px" width="9" height="9" viewBox="0 0 9 9"><path d="M4 0.500L0.500 4.500L4 8.500V6.500H6.500V2.500H4z" fill="#fff" stroke="#000" stroke-width="0.9" /><path d="M7.500 2.500v4" stroke="#000" stroke-width="0.9"/></svg>
<div class="abs" style="left:246px;top:213px;width:156px;height:137px;background:#fff;border:1px solid #828790;"></div>
<div class="abs" style="left:314px;top:214px;width:1px;height:19px;background:#e5e5e5;"></div>
<div class="abs" style="left:349px;top:214px;width:1px;height:19px;background:#e5e5e5;"></div>
<div class="abs" style="left:396px;top:214px;width:1px;height:19px;background:#e5e5e5;"></div>
<div class="d" style="left:252px;top:218px;">名称</div>
<div class="d" style="left:319px;top:218px;width:25px;text-align:center;">类型</div>
<div class="d" style="left:350px;top:218px;width:49px;text-align:center;">设置深度</div>
<div class="d n" style="left:252px;top:234px;">GL-1-1</div>
<div class="d n" style="left:311px;top:234px;width:41px;text-align:center;">GL</div>
<div class="d n" style="left:350px;top:234px;width:49px;text-align:center;">-</div>
<div class="d n" style="left:252px;top:247px;">ZC-800-2</div>
<div class="d n" style="left:311px;top:247px;width:41px;text-align:center;">ST</div>
<div class="d n" style="left:350px;top:247px;width:49px;text-align:center;">1.485</div>
<div class="d n" style="left:252px;top:260px;">609-3</div>
<div class="d n" style="left:311px;top:260px;width:41px;text-align:center;">ST</div>
<div class="d n" style="left:350px;top:260px;width:49px;text-align:center;">6.39</div>
<div class="d n" style="left:252px;top:272px;">800-4</div>
<div class="d n" style="left:311px;top:272px;width:41px;text-align:center;">ST</div>
<div class="d n" style="left:350px;top:272px;width:49px;text-align:center;">9.39</div>
<div class="d n" style="left:252px;top:285px;">800-5</div>
<div class="d n" style="left:311px;top:285px;width:41px;text-align:center;">ST</div>
<div class="d n" style="left:350px;top:285px;width:49px;text-align:center;">14.39</div>
<div class="abs" style="left:250px;top:298px;width:149px;height:13px;background:#e9e9e9;"></div>
<div class="d n" style="left:252px;top:298px;">18.8</div>
<div class="d n" style="left:311px;top:298px;width:41px;text-align:center;">S</div>
<div class="d n" style="left:350px;top:298px;width:49px;text-align:center;">18.8</div>
<div class="d n" style="left:252px;top:311px;">11.09</div>
<div class="d n" style="left:311px;top:311px;width:41px;text-align:center;">S</div>
<div class="d n" style="left:350px;top:311px;width:49px;text-align:center;">11.09</div>
<div class="d n" style="left:252px;top:324px;">5.24</div>
<div class="d n" style="left:311px;top:324px;width:41px;text-align:center;">S</div>
<div class="d n" style="left:350px;top:324px;width:49px;text-align:center;">5.24</div>
<div class="btn" style="left:246px;top:355px;width:35px;height:15px;line-height:13px;">添加<span class="n">(A)</span></div>
<div class="btn" style="left:286px;top:355px;width:34px;height:15px;line-height:13px;">修改<span class="n">(M)</span></div>
<div class="btn" style="left:326px;top:355px;width:34px;height:15px;line-height:13px;">删除<span class="n">(D)</span></div>
<div class="btn" style="left:366px;top:355px;width:34px;height:15px;line-height:13px;">排列<span class="n">(S)</span></div>
<div class="btn3" style="left:239px;top:378px;width:56px;height:17px;line-height:15px;padding-left:14px;">后退<span class="n">(<u>B</u>)</span></div>
<div class="btn" style="left:296px;top:378px;width:54px;height:17px;line-height:15px;">关闭<span class="n">(Q)</span></div>
<div class="btn3" style="left:351px;top:378px;width:58px;height:17px;line-height:15px;padding-right:14px;">前进<span class="n">(<u>N</u>)</span></div>
<svg style="left:243px;top:382px" width="9" height="9" viewBox="0 0 9 9"><path d="M4 0.500L0.500 4.500L4 8.500V6.500H6.500V2.500H4z" fill="#fff" stroke="#000" stroke-width="0.9" /><path d="M7.500 2.500v4" stroke="#000" stroke-width="0.9"/></svg>
<svg style="left:396px;top:382px" width="9" height="9" viewBox="0 0 9 9"><path d="M5 0.500L8.500 4.500L5 8.500V6.500H2.500V2.500H5z" fill="#fff" stroke="#000" stroke-width="0.9"/><path d="M1.500 2.500v4" stroke="#000" stroke-width="0.9"/></svg>
<div class="d" style="left:415px;top:127px;">类型</div>
<div class="abs" style="left:444px;top:126px;width:120px;height:15px;background:#cccccc;border:1px solid #bfbfbf;"></div>
<div class="d" style="left:447px;top:126px;color:#8a8a8a;">楼板</div>
<svg style="left:551px;top:131px" width="9" height="6" viewBox="0 0 9 6"><path d="M1 1l3.500 3.500L8 1" stroke="#b0b0b0" stroke-width="1" fill="none"/></svg>
<div class="d" style="left:415px;top:145px;">材料</div>
<div class="abs" style="left:444px;top:144px;width:98px;height:16px;background:#e1e1e1;border:1px solid #adadad;"></div>
<div class="d e" style="left:447px;top:146px;">C30</div>
<svg style="left:529px;top:149px" width="9" height="6" viewBox="0 0 9 6"><path d="M1.200 1l3.300 3.300L7.800 1" stroke="#606060" stroke-width="0.900" fill="none"/></svg>
<div class="btn" style="left:545px;top:144px;width:16px;height:16px;line-height:11px;font-size:8px;">...</div>
<div class="d" style="left:415px;top:164px;">厚度</div>
<div class="abs" style="left:444px;top:161px;width:98px;height:17px;background:#fff;border:1px solid #7a7a7a;"></div>
<div class="d e" style="left:447px;top:162px;">1.2</div>
<div class="d e" style="left:548px;top:165px;">m</div>
<div class="abs" style="left:413px;top:189px;width:149px;height:182px;background:#f0f0f0;border:1px solid;border-color:#707070 #e3e3e3 #e3e3e3 #707070;box-shadow:inset 1px 1px 0 #8a8a8a;"></div>
<div class="abs" style="left:414px;top:190px;width:147px;height:16px;background:#c0c0c0;border-bottom:1px solid #8a8a8a;"></div>
<div class="d" style="left:417px;top:191px;">设置深度</div>
<div class="abs" style="left:475px;top:190px;width:43px;height:15px;background:#fff;"></div>
<div class="d n" style="left:474px;top:191px;width:40px;text-align:right;font-size:9px;">18.80</div>
<div class="d n" style="left:521px;top:191px;font-size:9px;">m</div>
<svg style="left:0;top:0" width="1080" height="433" viewBox="0 0 1080 433"><polygon points="89,195.300 89,197.800 462,203 462,205.700 474.400,200 462,193.800 462,196.900" fill="#f922ee"/></svg>
<svg style="left:0;top:0" width="1080" height="433" viewBox="0 0 1080 433"><defs><linearGradient id="rg" x1="0.9" y1="0.1" x2="0.1" y2="0.9"><stop offset="0" stop-color="#ec4a12"/><stop offset="1" stop-color="#bf1414"/></linearGradient><linearGradient id="gg" x1="0.5" y1="0" x2="0.4" y2="1"><stop offset="0" stop-color="#fff0a0"/><stop offset="1" stop-color="#f0a818"/></linearGradient></defs><g opacity="0.93"><circle cx="945.800" cy="383.500" r="22.600" fill="url(#rg)"/><path d="M933.500 384C932 378 936 374 940.500 375C941.500 370 949 368 952.500 372C958 371 962 377 960 383C958.500 392 950 400 934.500 402C943 398.500 950.500 393 952 385C952.500 381 948.500 378.500 945.500 380.500C943 382.500 944.500 386 947.500 385.500C947.500 389.500 941 392 937 390C934.500 388.500 933.500 386 933.500 384Z" fill="url(#gg)"/></g><text x="974" y="391.800" font-family='"Liberation Serif","Noto Serif CJK SC",serif' font-weight="900" font-size="30.500" fill="#9a9a9a" fill-opacity="0.8">中金网</text><text x="975" y="404.800" font-family='"Liberation Sans",sans-serif' font-size="8.400" letter-spacing="1.400" fill="#909090" fill-opacity="0.75">CNGOLD.COM.CN</text><text x="926.500" y="418.800" font-family='"Liberation Sans","Noto Sans CJK SC",sans-serif' font-size="11" letter-spacing="9.900" fill="#8a98a8" fill-opacity="0.6">中文财经新媒体</text></svg>
</body></html>
